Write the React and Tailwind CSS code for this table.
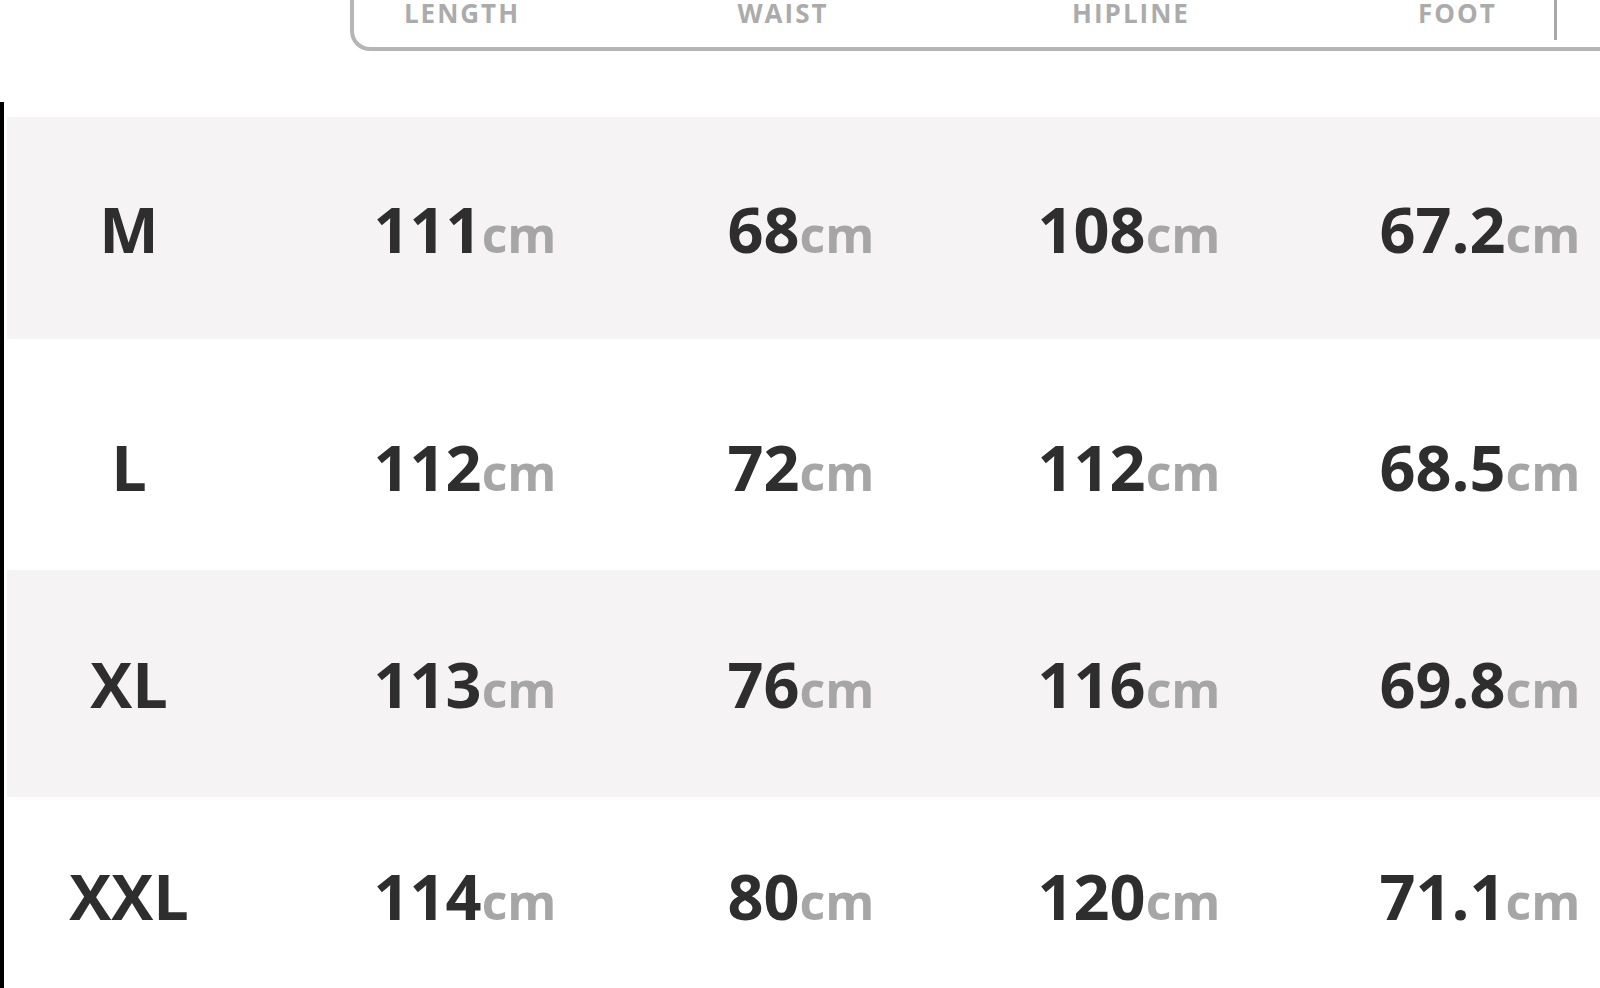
import React from 'react'

const rows = [
  { size: 'M', values: ['111', '68', '108', '67.2'], bg: 'bg-[#f5f3f4]', h: 'h-[222px]', pt: '' },
  { size: 'L', values: ['112', '72', '112', '68.5'], bg: 'bg-white', h: 'h-[231px]', pt: 'pt-[23px]' },
  { size: 'XL', values: ['113', '76', '116', '69.8'], bg: 'bg-[#f5f3f4]', h: 'h-[227px]', pt: '' },
  { size: 'XXL', values: ['114', '80', '120', '71.1'], bg: 'bg-white', h: 'h-[196px]', pt: '' },
]

const font = { fontFamily: '"Open Sans", "Noto Sans", sans-serif' }

function Value({ n }) {
  return (
    <span className="whitespace-nowrap leading-none">
      <span className="text-[63px] font-bold text-[#2e2e2e]">{n}</span>
      <span className="text-[50px] font-bold text-[#a6a6a6]">cm</span>
    </span>
  )
}

export default function App() {
  return (
    <div className="w-[1600px] h-[988px] overflow-hidden bg-white" style={font}>
      {/* header labels */}
      <div className="flex pl-[350px]">
        <div className="flex flex-1 h-[51px] border-l-4 border-b-4 border-[#b5b5b5] rounded-bl-[20px] text-[26px] leading-[26px] font-bold tracking-[2px] text-[#ababab]">
          <div className="w-[216px] text-center">LENGTH</div>
          <div className="w-[426px] text-center">WAIST</div>
          <div className="w-[270px] text-center">HIPLINE</div>
          <div className="w-[291px] h-[40px] pl-[152px] border-r-[3px] border-[#a8a8a8]">FOOT</div>
        </div>
      </div>

      {/* size rows */}
      <div className="mt-[51px] border-l-4 border-black pl-[3px] pt-[15px]">
        {rows.map((row) => (
          <div
            key={row.size}
            className={`grid grid-cols-[244px_428px_244px_412px_290px] items-center ${row.bg} ${row.h} ${row.pt}`}
          >
            <div className="text-center text-[63px] leading-none font-bold text-[#2e2e2e]">{row.size}</div>
            {row.values.map((v, i) => (
              <div key={i} className="text-center">
                <Value n={v} />
              </div>
            ))}
          </div>
        ))}
      </div>
    </div>
  )
}
